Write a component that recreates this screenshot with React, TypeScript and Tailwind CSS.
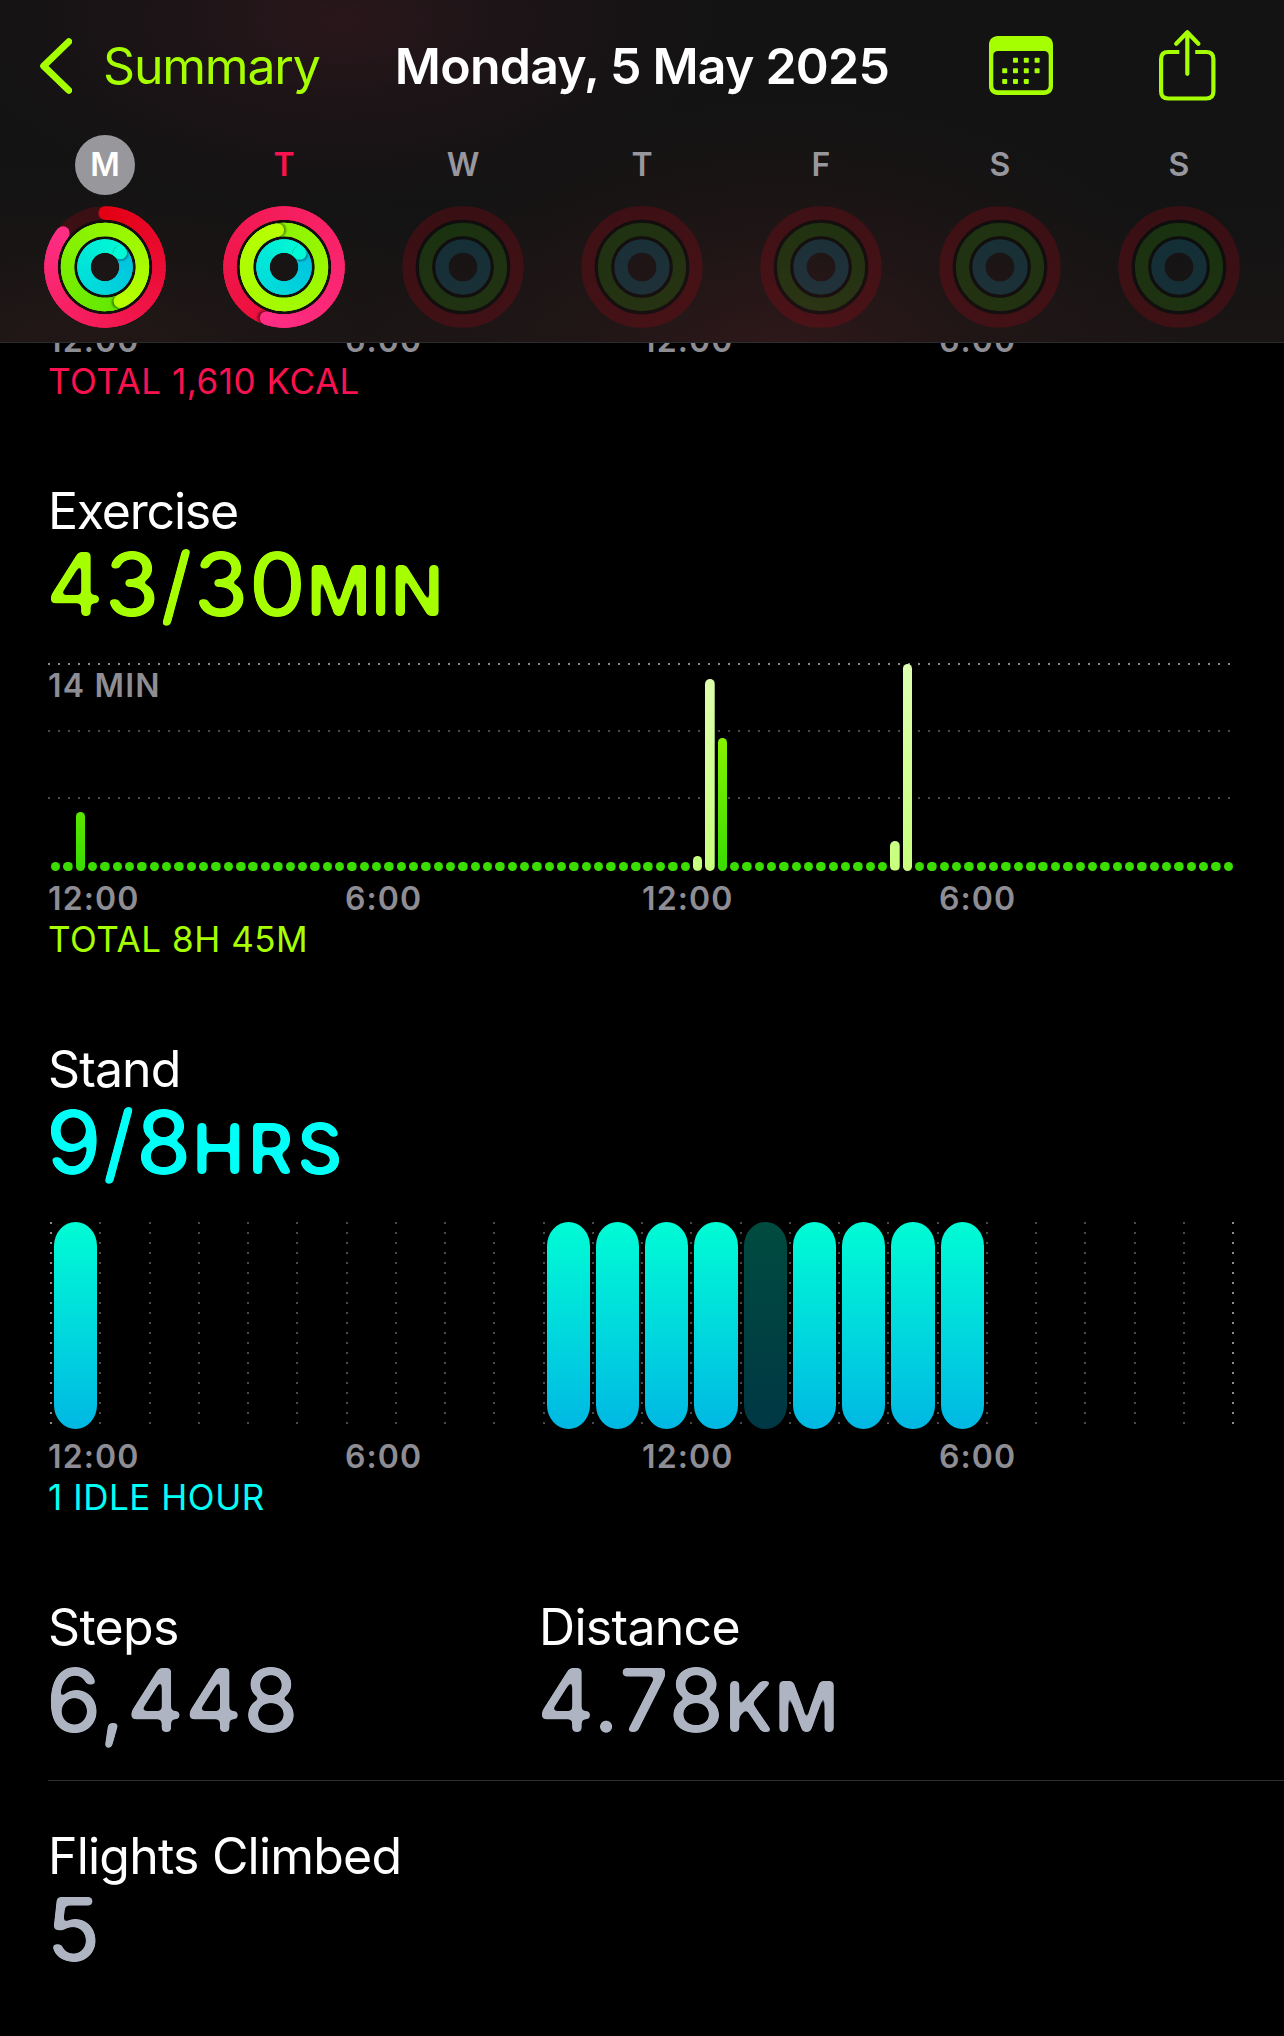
import type { ReactNode } from "react";

type RGB = [number, number, number];
type Ring = { radius: number; from: RGB; to: RGB; track: string };

const RINGS: Ring[] = [
  { radius: 54, from: [227, 0, 21], to: [255, 46, 133], track: "rgba(227,0,21,0.18)" },
  { radius: 37.5, from: [59, 221, 0], to: [184, 255, 0], track: "rgba(59,221,0,0.15)" },
  { radius: 21, from: [0, 185, 225], to: [0, 250, 213], track: "rgba(20,185,225,0.17)" },
];

const THICKNESS = 13.3;

type Day = { letter: string; state: "selected" | "today" | "future"; degrees?: [number, number, number] };

const DAYS: Day[] = [
  { letter: "M", state: "selected", degrees: [309, 516, 407] },
  { letter: "T", state: "today", degrees: [559, 1070, 409] },
  { letter: "W", state: "future" },
  { letter: "T", state: "future" },
  { letter: "F", state: "future" },
  { letter: "S", state: "future" },
  { letter: "S", state: "future" },
];

const point = (r: number, deg: number): [number, number] => {
  const a = ((deg - 90) * Math.PI) / 180;
  return [r * Math.cos(a), r * Math.sin(a)];
};

const mix = (a: RGB, b: RGB, t: number) =>
  `rgb(${a.map((v, i) => Math.round(v + (b[i] - v) * t)).join(",")})`;

function RingArc({ ring, degrees, id }: { ring: Ring; degrees: number; id: string }) {
  const { radius: r, from, to } = ring;
  const step = 4;
  const start = Math.max(0, degrees - 360);
  const parts = [];
  for (let d = start; d < degrees; d += step) {
    const end = Math.min(d + step * 2.5, degrees);
    const [x1, y1] = point(r, d);
    const [x2, y2] = point(r, end);
    parts.push(
      <path
        key={d}
        d={`M${x1} ${y1}A${r} ${r} 0 0 1 ${x2} ${y2}`}
        stroke={mix(from, to, d / degrees)}
        strokeWidth={THICKNESS}
        fill="none"
      />,
    );
  }
  const [sx, sy] = point(r, 0);
  const [ex, ey] = point(r, degrees);
  const [hx, hy] = point(r, degrees + 2);
  return (
    <g>
      <mask id={id}>
        <circle r={r} fill="none" stroke="white" strokeWidth={THICKNESS} />
      </mask>
      {degrees < 360 && <circle cx={sx} cy={sy} r={THICKNESS / 2} fill={mix(from, to, 0)} />}
      {parts}
      {degrees > 360 && (
        <g mask={`url(#${id})`}>
          <circle cx={hx} cy={hy} r={THICKNESS / 2 + 0.6} fill="black" opacity="0.45" filter="url(#cap-shadow)" />
          <path
            d={`M${point(r, degrees - 16).join(" ")}A${r} ${r} 0 0 1 ${ex} ${ey}`}
            stroke={mix(from, to, 0.98)}
            strokeWidth={THICKNESS}
            fill="none"
          />
        </g>
      )}
      <circle cx={ex} cy={ey} r={THICKNESS / 2} fill={mix(from, to, 1)} />
    </g>
  );
}

function ActivityRings({ degrees, id }: { degrees?: [number, number, number]; id: string }) {
  return (
    <svg className="h-[122px] w-[122px]" viewBox="-61 -61 122 122">
      <circle r="45.7" fill="none" stroke="black" strokeOpacity="0.28" strokeWidth="3.4" />
      <circle r="29.3" fill="none" stroke="black" strokeOpacity="0.28" strokeWidth="3.4" />
      {RINGS.map((ring, i) => (
        <g key={ring.radius}>
          <circle r={ring.radius} fill="none" stroke={ring.track} strokeWidth={THICKNESS} />
          {degrees && <RingArc ring={ring} degrees={degrees[i]} id={`${id}-${i}`} />}
        </g>
      ))}
    </svg>
  );
}

const DAY_STYLE = {
  selected: "bg-[#98979c] text-white",
  today: "text-[#fa114f]",
  future: "text-[#98979e]",
};

function CalendarIcon() {
  const dots = [
    [1, 0], [2, 0], [3, 0],
    [0, 1], [1, 1], [2, 1], [3, 1],
    [0, 2], [1, 2], [2, 2],
  ];
  return (
    <svg className="h-[60px] w-[64px]" viewBox="0 0 64 60" fill="#a6ff00">
      <path
        fillRule="evenodd"
        d="M9 0H55C60.500 0 64 3.500 64 9V50C64 55.500 60.500 59 55 59H9C3.500 59 0 55.500 0 50V9C0 3.500 3.500 0 9 0ZM9 15C6 15 4.300 16.500 4.300 19.500V49.500C4.300 52.500 6 54.300 9 54.300H55C58 54.300 59.700 52.500 59.700 49.500V19.500C59.700 16.500 58 15 55 15Z"
      />
      {dots.map(([c, r]) => (
        <rect key={`${c}${r}`} x={13.200 + c * 10.800} y={21.700 + r * 10.600} width="5" height="5" rx="0.800" />
      ))}
    </svg>
  );
}

function ShareIcon() {
  return (
    <svg
      className="-mt-px h-[74px] w-[57px]"
      viewBox="0 0 57 74"
      fill="none"
      stroke="#a6ff00"
      strokeWidth="4.200"
      strokeLinecap="round"
      strokeLinejoin="round"
    >
      <path strokeLinecap="butt" d="M20.300 23H9.200C4.500 23 2.100 25.400 2.100 30V62.500C2.100 67.100 4.500 69.500 9.200 69.500H47.300C52 69.500 54.400 67.100 54.400 62.500V30C54.400 25.400 52 23 47.300 23H36.200" />
      <path d="M28.300 4V44.800M17.200 14.700L28.300 3.300L39.400 14.700" />
    </svg>
  );
}

function Header() {
  return (
    <header className="relative z-10 h-[343px] border-b border-[#2c2b2d] bg-[#141414] bg-[radial-gradient(ellipse_380px_190px_at_340px_20px,#29161b_0%,#23151999_45%,transparent_100%),radial-gradient(ellipse_420px_250px_at_780px_350px,#2e181a_0%,#25161799_45%,transparent_100%),radial-gradient(ellipse_420px_190px_at_90px_350px,#231717_0%,#1d151588_50%,transparent_100%),linear-gradient(to_bottom,#131313_60%,#1a1515)]">
      <div className="grid h-[132px] grid-cols-[380px_1fr_380px] items-center">
        <button className="flex items-center gap-[31px] pl-[39px] text-left text-[50px] leading-none tracking-[-1.2px] text-[#a6ff00]">
          <svg className="h-[58px] w-[33px]" viewBox="0 0 33 58" fill="none" stroke="#a6ff00" strokeWidth="6.800" strokeLinecap="round" strokeLinejoin="round">
            <path d="M29.800 4.600L4.600 29L29.800 53.400" />
          </svg>
          Summary
        </button>
        <h1 className="text-center text-[50px] leading-none font-semibold tracking-[-0.760px] whitespace-nowrap text-white">
          Monday, 5 May 2025
        </h1>
        <div className="flex items-center justify-end gap-[106px] pr-[68px]">
          <CalendarIcon />
          <ShareIcon />
        </div>
      </div>
      <div className="grid grid-cols-7 px-[15.5px] pt-[3px]">
        {DAYS.map((day, i) => (
          <div key={i} className="flex flex-col items-center gap-[11px]">
            <div className={`flex h-15 w-15 items-center justify-center rounded-full text-[32px] leading-none font-semibold ${DAY_STYLE[day.state]}`}>
              {day.letter}
            </div>
            <ActivityRings degrees={day.degrees} id={`ring-${i}`} />
          </div>
        ))}
      </div>
    </header>
  );
}

function HourLabels() {
  return (
    <div className="grid h-[41px] grid-cols-[repeat(4,297px)] items-center text-[32px] leading-none font-semibold tracking-[1.1px] text-[#8e8d94]">
      {["12:00", "6:00", "12:00", "6:00"].map((t, i) => (
        <span key={i}>{t}</span>
      ))}
    </div>
  );
}

function Footnote({ className, children }: { className: string; children: ReactNode }) {
  return (
    <div className={`flex h-[41px] items-center text-[35px] leading-none tracking-[0.550px] ${className}`}>
      {children}
    </div>
  );
}

function Metric({
  title, value, unit, tracking, valueTracking = "tracking-[0.6px]", unitTracking = "tracking-normal", color = "text-[#aeb4c2]",
}: {
  title: string;
  value: string;
  unit?: string;
  tracking: string;
  valueTracking?: string;
  unitTracking?: string;
  color?: string;
}) {
  return (
    <div>
      <h2 className={`text-[50px] leading-[62px] text-white ${tracking}`}>{title}</h2>
      <p className={`-ml-0.5 text-[88px] leading-[85px] font-medium [filter:url(#rounded)] ${color} ${valueTracking}`}>
        {value}
        {unit && <span className={`text-[70px] leading-none font-semibold ${unitTracking}`}>{unit}</span>}
      </p>
    </div>
  );
}

const EXERCISE: Record<number, { minutes: number; workout?: boolean }> = {
  2: { minutes: 4 },
  52: { minutes: 1, workout: true },
  53: { minutes: 13, workout: true },
  54: { minutes: 9 },
  68: { minutes: 2, workout: true },
  69: { minutes: 14, workout: true },
};

function GridLine({ color }: { color: string }) {
  return (
    <svg className="block h-[2px] w-[1186px]">
      <line x1="0" y1="1" x2="1186" y2="1" stroke={color} strokeWidth="2" strokeDasharray="2 8" shapeRendering="crispEdges" />
    </svg>
  );
}

function ExerciseChart() {
  return (
    <div className="relative h-[208px]">
      <div className="flex h-[136px] flex-col justify-between">
        <GridLine color="#8b8b8b" />
        <GridLine color="#4a4a4a" />
        <GridLine color="#4a4a4a" />
      </div>
      <span className="absolute top-[7px] left-0 text-[32px] leading-8 font-semibold tracking-[1.2px] text-[#8e8d94]">14 MIN</span>
      <div className="absolute bottom-0 left-[1.5px] flex h-full w-[1184.6px] items-end">
        {Array.from({ length: 96 }, (_, i) => {
          const bar = EXERCISE[i];
          return (
            <div key={i} className="flex flex-1 justify-center">
              <div
                className={`w-[9.4px] rounded-full bg-[length:100%_207px] bg-bottom bg-no-repeat ${
                  bar?.workout
                    ? "bg-[linear-gradient(to_top,#c8ff7c,#dfffb0)]"
                    : "bg-[linear-gradient(to_top,#3bdd00_3%,#b4ff00)]"
                }`}
                style={{ height: bar ? bar.minutes * 14.8 : 9.4 }}
              />
            </div>
          );
        })}
      </div>
    </div>
  );
}

const STAND: Record<number, "stood" | "idle"> = {
  0: "stood", 10: "stood", 11: "stood", 12: "stood", 13: "stood",
  14: "idle", 15: "stood", 16: "stood", 17: "stood", 18: "stood",
};

function StandChart() {
  return (
    <div className="relative h-[208px]">
      <svg className="block h-[208px] w-[1188px]">
        {Array.from({ length: 25 }, (_, i) => {
          const x = Math.round(2 + i * 49.25) + 1;
          return (
            <line
              key={i}
              x1={x} x2={x} y1="1" y2="204"
              stroke={i === 0 || i === 24 ? "#8b8b8b" : "#4a4a4a"}
              strokeWidth="2"
              strokeDasharray="2 8"
              shapeRendering="crispEdges"
            />
          );
        })}
      </svg>
      <div className="absolute top-px left-[3px] flex h-[207px] w-[1182px]">
        {Array.from({ length: 24 }, (_, i) => (
          <div key={i} className="flex-1 px-[3px]">
            {STAND[i] && (
              <div
                className={`h-full [border-radius:21.6px/24px] bg-linear-to-b from-[#00fcd4] to-[#00b8e3] ${
                  STAND[i] === "idle" ? "opacity-30" : ""
                }`}
              />
            )}
          </div>
        ))}
      </div>
    </div>
  );
}

export default function App() {
  return (
    <div className="h-[2036px] w-[1284px] overflow-hidden bg-black font-[Inter,sans-serif]">
      <svg className="absolute h-0 w-0" aria-hidden="true">
        <filter id="rounded" colorInterpolationFilters="sRGB">
          <feGaussianBlur stdDeviation="2.3" />
          <feColorMatrix values="1 0 0 0 0  0 1 0 0 0  0 0 1 0 0  0 0 0 7 -3" />
        </filter>
        <filter id="cap-shadow" x="-50%" y="-50%" width="200%" height="200%">
          <feGaussianBlur stdDeviation="1.3" />
        </filter>
      </svg>
      <Header />
      <main className="-mt-[23px] pl-12">
        <HourLabels />
        <Footnote className="text-[#fa114f]">TOTAL 1,610 KCAL</Footnote>

        <section className="mt-[78px]">
          <Metric title="Exercise" value="43/30" unit="MIN" tracking="tracking-[-1.2px]" color="text-[#a6ff00]" />
          <div className="mt-9">
            <ExerciseChart />
          </div>
          <div className="mt-[7px]">
            <HourLabels />
          </div>
          <Footnote className="text-[#a6ff00]">TOTAL 8H 45M</Footnote>
        </section>

        <section className="mt-[78px]">
          <Metric title="Stand" value="9/8" unit="HRS" tracking="tracking-[-0.9px]" valueTracking="tracking-[1px]" unitTracking="tracking-[3.4px]" color="text-[#00fff6]" />
          <div className="mt-9">
            <StandChart />
          </div>
          <div className="mt-[7px]">
            <HourLabels />
          </div>
          <Footnote className="text-[#00fff6]">1 IDLE HOUR</Footnote>
        </section>

        <section className="mt-[78px] grid h-[185px] grid-cols-[491px_1fr] border-b border-[#303033]">
          <Metric title="Steps" value="6,448" tracking="tracking-[-0.7px]" />
          <Metric title="Distance" value="4.78" unit="KM" tracking="tracking-[-0.7px]" valueTracking="tracking-[0.9px]" />
        </section>
        <section className="mt-11">
          <Metric title="Flights Climbed" value="5" tracking="tracking-[-0.8px]" />
        </section>
      </main>
    </div>
  );
}
